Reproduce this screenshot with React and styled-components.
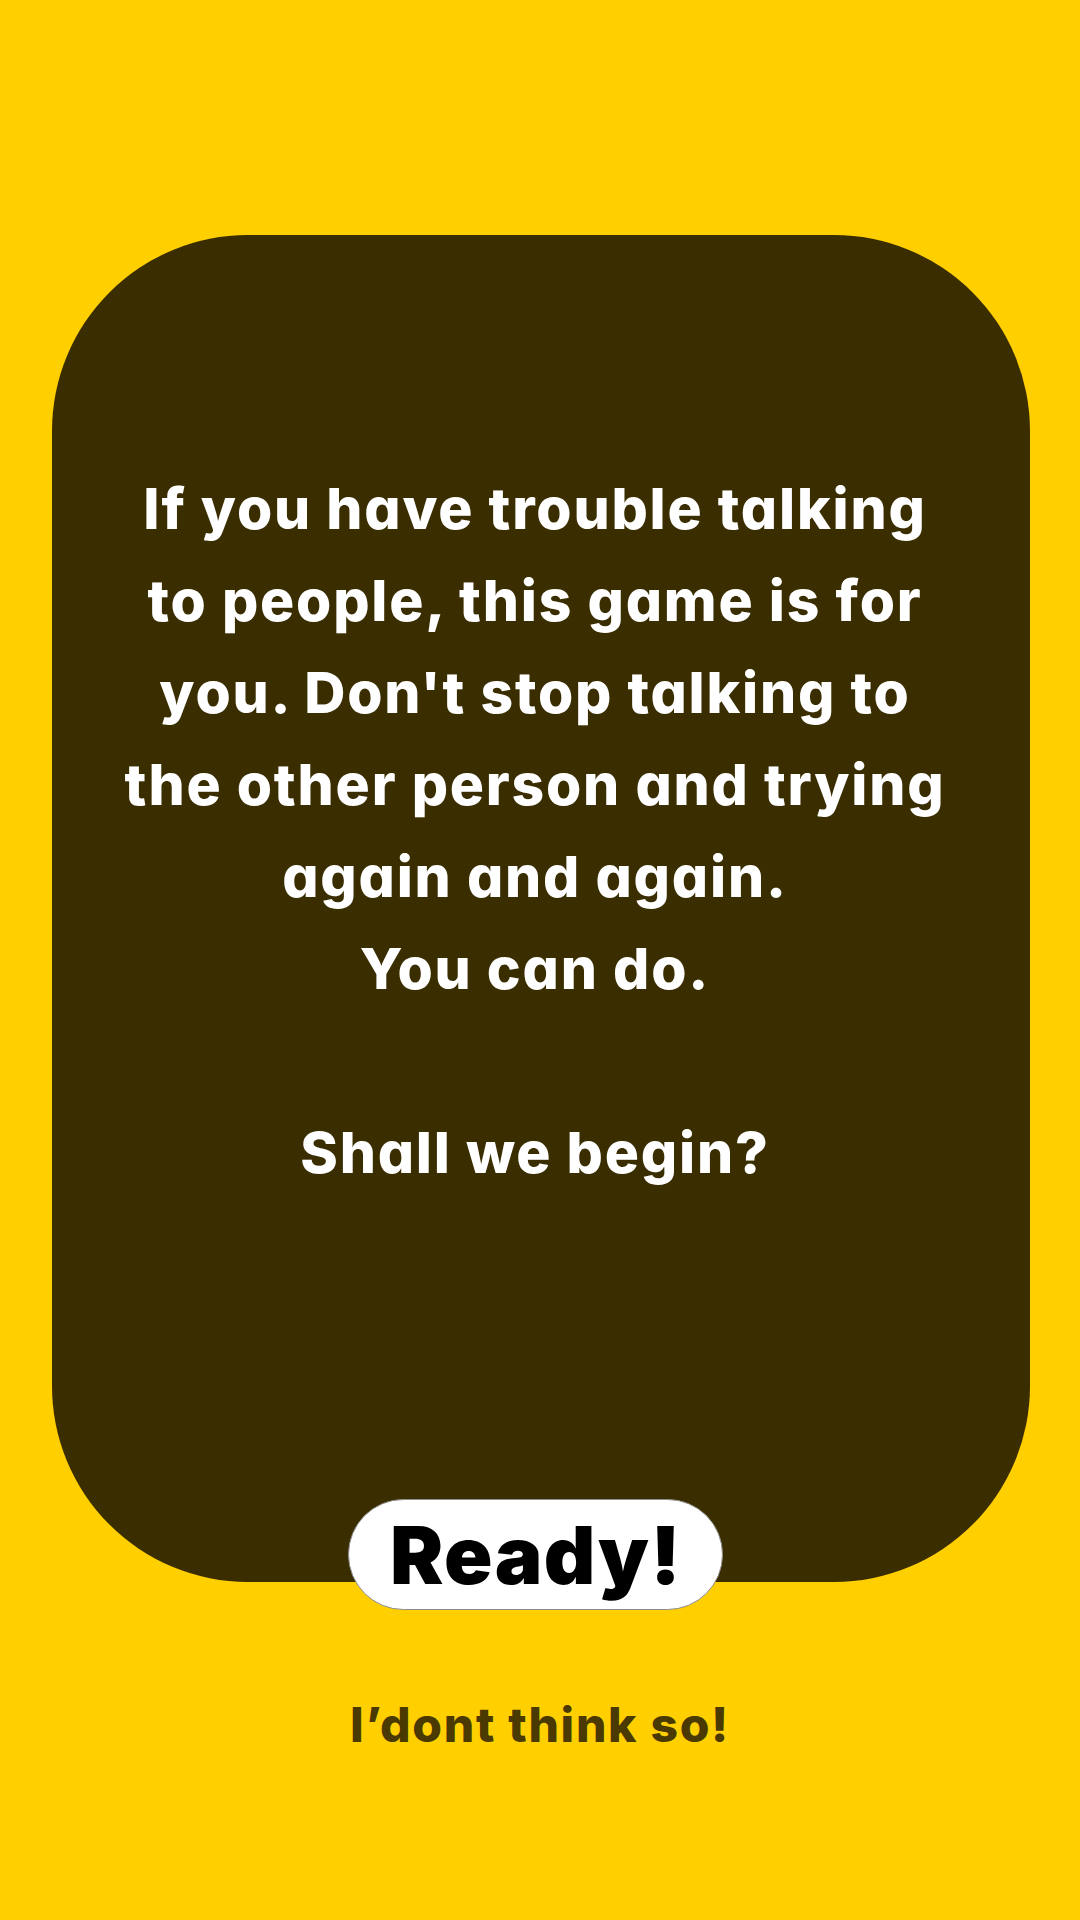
import styled, { createGlobalStyle } from 'styled-components';

const GlobalStyle = createGlobalStyle`
  html, body {
    margin: 0;
    padding: 0;
    background: #FFCF00;
  }
  body {
    font-family: Inter, "Noto Sans", sans-serif;
    font-feature-settings: "cv11" 1;
  }
`;

export default function App() {
  return (
    <Page>
      <GlobalStyle />
      <Card>
        <Message>
          If you have trouble talking<br />
          to people, this game is for<br />
          you. Don't stop talking to<br />
          the other person and trying<br />
          again and again.<br />
          You can do.<br />
          <br />
          Shall we begin?
        </Message>
        <ReadyButton>Ready!</ReadyButton>
      </Card>
      <Decline>I’dont think so!</Decline>
    </Page>
  );
}

const Page = styled.div`
  width: 1080px;
  height: 1920px;
  background: #FFCF00;
  display: flex;
  flex-direction: column;
  align-items: center;
  padding-top: 235px;
  box-sizing: border-box;
`;

const Card = styled.div`
  width: 978px;
  height: 1347px;
  margin-left: 2px;
  box-sizing: border-box;
  padding: 228px 12px 0 0;
  background: #3A2D00;
  border-radius: 196px;
  display: flex;
  flex-direction: column;
  align-items: center;
`;

const Message = styled.p`
  margin: 0;
  color: #ffffff;
  font-size: 57px;
  font-weight: 800;
  line-height: 92px;
  letter-spacing: 1.8px;
  text-align: center;
  white-space: nowrap;
`;

const ReadyButton = styled.button`
  margin-top: auto;
  margin-bottom: -28px;
  width: 375px;
  height: 111px;
  border: 1px solid #8c8c8c;
  border-radius: 56px;
  background: #ffffff;
  color: #000000;
  font-family: Inter, "Noto Sans", sans-serif;
  font-size: 80px;
  font-weight: 900;
  line-height: 1;
  letter-spacing: 1.4px;
  display: flex;
  align-items: center;
  justify-content: center;
  padding: 0 0 0 2px;
  cursor: pointer;
`;

const Decline = styled.span`
  margin-top: 119px;
  color: #4A3900;
  font-size: 48px;
  font-weight: 800;
  line-height: 1;
  letter-spacing: 1.7px;
`;
